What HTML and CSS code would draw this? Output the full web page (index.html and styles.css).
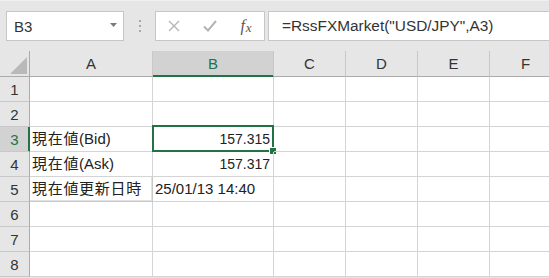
FILE: index.html
```html
<!DOCTYPE html>
<html lang="ja">
<head>
    <meta charset="UTF-8">
    <title>RssFXMarket</title>
    <link rel="stylesheet" href="styles.css">
</head>
<body>
    <div class="toolbar">
        <div class="name-box">
            <span>B3</span>
            <svg class="drop" width="7" height="4" viewBox="0 0 7 4"><path d="M0 0H7L3.5 4Z" fill="#7a7a7a"/></svg>
        </div>
        <div class="grip"><i></i><i></i><i></i></div>
        <div class="fx-box">
            <span class="fx-btn">
                <svg width="12" height="12" viewBox="0 0 12 12"><path d="M1 1L11 11M11 1L1 11" stroke="#b4b4b4" stroke-width="1.3" fill="none"/></svg>
            </span>
            <span class="fx-btn">
                <svg width="14" height="12" viewBox="0 0 14 12"><path d="M1 6.5L5 10.5L13 1" stroke="#b4b4b4" stroke-width="2" fill="none"/></svg>
            </span>
            <span class="fx-btn fx">f<span class="fx-x">x</span></span>
        </div>
        <div class="formula">=RssFXMarket("USD/JPY",A3)</div>
    </div>

    <div class="sheet">
        <!-- 見出し行 -->
        <div class="corner">
            <svg width="17" height="17" viewBox="0 0 17 17"><path d="M17 0V17H0Z" fill="#b9b9b9"/></svg>
        </div>
        <div class="col-head">A</div>
        <div class="col-head active">B</div>
        <div class="col-head">C</div>
        <div class="col-head">D</div>
        <div class="col-head">E</div>
        <div class="col-head cut">F</div>

        <div class="row-head">1</div>
        <div class="cell"></div><div class="cell"></div><div class="cell"></div><div class="cell"></div><div class="cell"></div><div class="cell"></div>

        <div class="row-head">2</div>
        <div class="cell"></div><div class="cell"></div><div class="cell"></div><div class="cell"></div><div class="cell"></div><div class="cell"></div>

        <div class="row-head active">3</div>
        <div class="cell"><span class="jp">現在値</span>(Bid)</div>
        <div class="cell num selected">157.315
            <div class="sel-box"></div>
            <div class="fill-handle"></div>
        </div>
        <div class="cell"></div><div class="cell"></div><div class="cell"></div><div class="cell"></div>

        <div class="row-head">4</div>
        <div class="cell"><span class="jp">現在値</span>(Ask)</div>
        <div class="cell num">157.317</div>
        <div class="cell"></div><div class="cell"></div><div class="cell"></div><div class="cell"></div>

        <div class="row-head">5</div>
        <div class="cell boxed"><span class="jp">現在値更新日時</span></div>
        <div class="cell date">25/01/13 14:40</div>
        <div class="cell"></div><div class="cell"></div><div class="cell"></div><div class="cell"></div>

        <div class="row-head">6</div>
        <div class="cell"></div><div class="cell"></div><div class="cell"></div><div class="cell"></div><div class="cell"></div><div class="cell"></div>

        <div class="row-head">7</div>
        <div class="cell"></div><div class="cell"></div><div class="cell"></div><div class="cell"></div><div class="cell"></div><div class="cell"></div>

        <div class="row-head">8</div>
        <div class="cell"></div><div class="cell"></div><div class="cell"></div><div class="cell"></div><div class="cell"></div><div class="cell"></div>
    </div>
</body>
</html>
```

FILE: styles.css
```css
* {
    margin: 0;
    padding: 0;
    box-sizing: border-box;
}

body {
    width: 549px;
    height: 278px;
    overflow: hidden;
    background: #e6e6e6;
    font-family: 'Liberation Sans', 'Noto Sans CJK JP', sans-serif;
    font-size: 15px;
    color: #222;
}

/* 数式バー */
.toolbar {
    height: 51px;
    background: #e6e6e6;
    border-top: 1px solid #f0f0f0;
    padding: 10px 0 0 6px;
    display: flex;
    align-items: flex-start;
}

.name-box {
    width: 118px;
    height: 30px;
    background: #fff;
    border: 1px solid #c6c6c6;
    display: flex;
    align-items: center;
    justify-content: space-between;
    padding: 0 6px 0 7px;
    color: #333;
}

.name-box .drop {
    margin-top: -2px;
}

.grip {
    width: 31px;
    height: 30px;
    display: flex;
    flex-direction: column;
    align-items: center;
    justify-content: center;
    gap: 3px;
}

.grip i {
    width: 2px;
    height: 2px;
    background: #a8a8a8;
}

.fx-box {
    width: 110px;
    height: 30px;
    background: #fff;
    border: 1px solid #c6c6c6;
    display: flex;
}

.fx-btn {
    width: 36px;
    display: flex;
    align-items: center;
    justify-content: center;
}

.fx {
    font-family: 'Liberation Serif', serif;
    font-style: italic;
    font-size: 16px;
    color: #555;
}

.fx-x {
    font-size: 13px;
    margin-left: 1px;
    margin-top: 3px;
}

.formula {
    flex: 1;
    margin-left: 3px;
    height: 30px;
    background: #fff;
    border: 1px solid #c6c6c6;
    border-right: none;
    padding-left: 13px;
    line-height: 28px;
    font-size: 15.4px;
    color: #333;
}

/* シート */
.sheet {
    display: grid;
    grid-template-columns: 30px 123px 121px 72px 72px 72px 59px;
    grid-template-rows: 26px;
    grid-auto-rows: 25px;
    background: #fff;
}

.corner,
.col-head,
.row-head {
    background: #e6e6e6;
    color: #333;
    display: flex;
    align-items: center;
    justify-content: center;
}

.corner {
    border-right: 1px solid #ababab;
    border-bottom: 1px solid #ababab;
    align-items: flex-end;
    justify-content: flex-end;
    padding: 0 2px 2px 0;
}

.col-head {
    border-right: 1px solid #c8c8c8;
    border-bottom: 1px solid #ababab;
}

.col-head.cut {
    padding-left: 12px;
}

.col-head.active {
    background: #d2d2d2;
    color: #217346;
    border-bottom-color: #217346;
    box-shadow: inset 0 -1px 0 #217346;
}

.row-head {
    border-right: 1px solid #ababab;
    border-bottom: 1px solid #c8c8c8;
}

.row-head.active {
    background: #d2d2d2;
    color: #217346;
    border-right-color: #217346;
    box-shadow: inset -1px 0 0 #217346;
}

.cell {
    position: relative;
    border-right: 1px solid #d4d4d4;
    border-bottom: 1px solid #d4d4d4;
    line-height: 24px;
    padding: 0 3px 0 2px;
    white-space: nowrap;
    color: #222;
}

.sheet > :nth-child(7n) {
    border-right: none;
}

.cell .jp {
    letter-spacing: 0.7px;
}

.cell.num {
    text-align: right;
    font-size: 14px;
}

.cell.boxed {
    border-right-color: #c8c8c8;
    border-bottom-color: #c8c8c8;
    box-shadow: inset -1px -1px 0 #e2e2e2;
}

.sel-box {
    position: absolute;
    left: -1px;
    top: -2px;
    width: 122px;
    height: 27px;
    border: 2px solid #217346;
}

.fill-handle {
    position: absolute;
    left: 116px;
    top: 20px;
    width: 8px;
    height: 8px;
    background: #217346;
    border: 1px solid #fff;
}
```
